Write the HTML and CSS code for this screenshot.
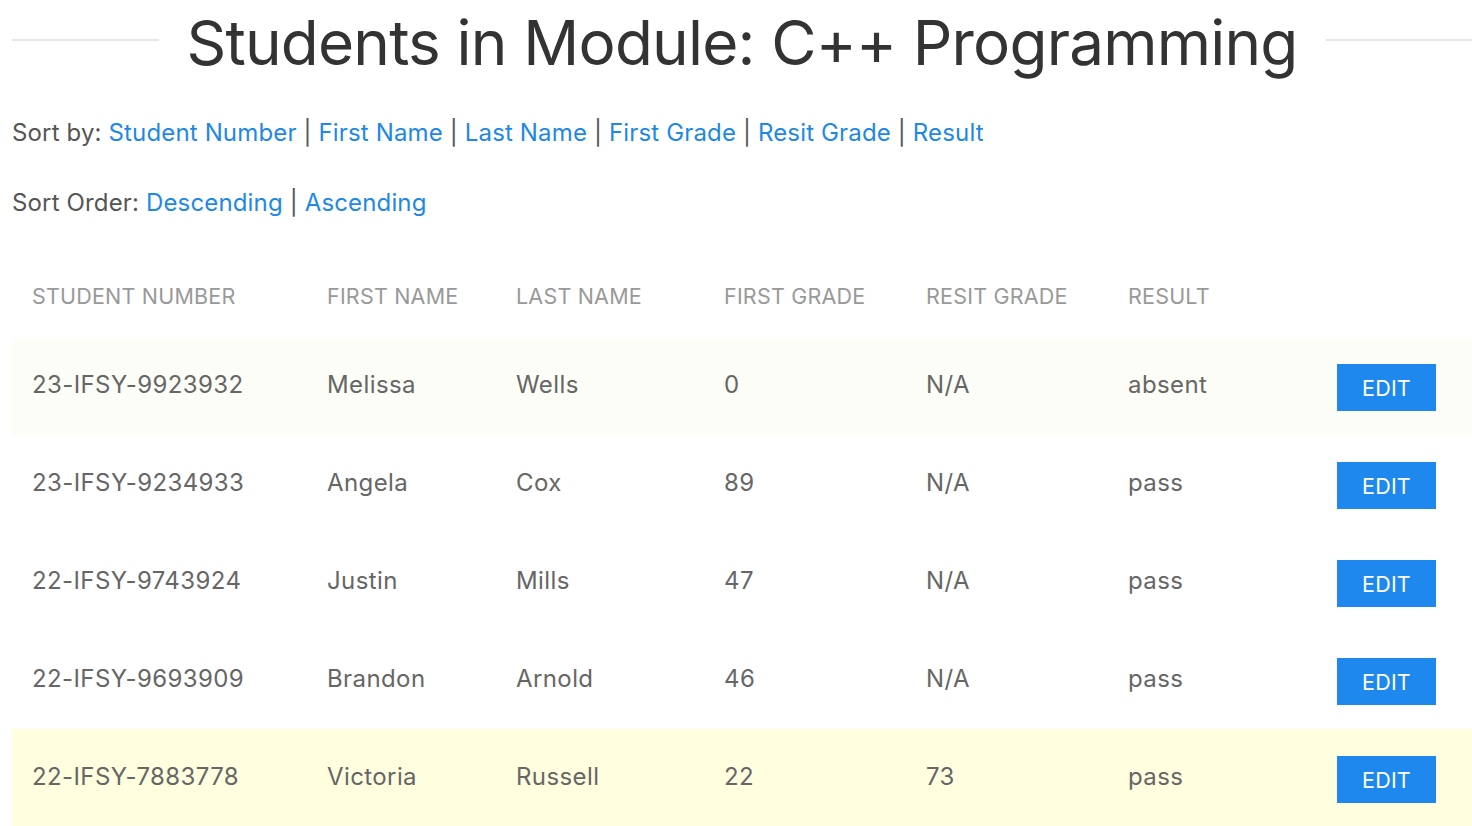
FILE: index.html
```html
<!DOCTYPE html>
<html lang="en">
<head>
<meta charset="utf-8">
<title>Students in Module: C++ Programming</title>
<link rel="stylesheet" href="styles.css">
</head>
<body>
<main class="page">
  <h1 class="title"><span>Students in Module: C++ Programming</span></h1>
  <p class="sort">Sort by: <a href="#">Student Number</a> | <a href="#">First Name</a> | <a href="#">Last Name</a> | <a href="#">First Grade</a> | <a href="#">Resit Grade</a> | <a href="#">Result</a></p>
  <p class="sort">Sort Order: <a href="#">Descending</a> | <a href="#">Ascending</a></p>
  <table class="students">
    <colgroup>
      <col class="c-num"><col class="c-first"><col class="c-last"><col class="c-grade"><col class="c-resit"><col class="c-result"><col class="c-action">
    </colgroup>
    <thead>
      <tr><th>Student Number</th><th>First Name</th><th>Last Name</th><th>First Grade</th><th>Resit Grade</th><th>Result</th><th></th></tr>
    </thead>
    <tbody>
      <tr class="row-faint"><td>23-IFSY-9923932</td><td>Melissa</td><td>Wells</td><td>0</td><td>N/A</td><td>absent</td><td><button class="edit">EDIT</button></td></tr>
      <tr><td>23-IFSY-9234933</td><td>Angela</td><td>Cox</td><td>89</td><td>N/A</td><td>pass</td><td><button class="edit">EDIT</button></td></tr>
      <tr><td>22-IFSY-9743924</td><td>Justin</td><td>Mills</td><td>47</td><td>N/A</td><td>pass</td><td><button class="edit">EDIT</button></td></tr>
      <tr><td>22-IFSY-9693909</td><td>Brandon</td><td>Arnold</td><td>46</td><td>N/A</td><td>pass</td><td><button class="edit">EDIT</button></td></tr>
      <tr class="row-resit"><td>22-IFSY-7883778</td><td>Victoria</td><td>Russell</td><td>22</td><td>73</td><td>pass</td><td><button class="edit">EDIT</button></td></tr>
    </tbody>
  </table>
</main>
</body>
</html>
```

FILE: styles.css
```css
html, body {
  margin: 0;
  padding: 0;
  background: #ffffff;
}
body {
  font-family: Inter, "Noto Sans", "Liberation Sans", sans-serif;
  color: #555;
  overflow: hidden;
}
.page {
  padding-left: 12px;
  width: 1460px;
}
.title {
  display: flex;
  align-items: center;
  gap: 28px;
  margin: 0 0 31px;
  height: 84px;
  font-size: 62px;
  font-weight: 400;
  color: #333;
  letter-spacing: -0.8px;
}
.title::before,
.title::after {
  content: "";
  flex: 1;
  height: 2px;
  background: #e6e6e6;
  margin-top: -5px;
}
.sort {
  margin: 0 0 34px;
  font-size: 24px;
  line-height: 36px;
  letter-spacing: 0.15px;
  color: #555;
}
.sort a {
  color: #1e88e5;
  text-decoration: none;
}
.students {
  width: 1460px;
  border-collapse: collapse;
  table-layout: fixed;
}
.c-num { width: 295px; }
.c-first { width: 189px; }
.c-last { width: 208px; }
.c-grade { width: 202px; }
.c-resit { width: 202px; }
.c-result { width: 209px; }
.c-action { width: 155px; }
.students th {
  height: 82px;
  padding: 0 20px;
  text-align: left;
  font-size: 21.5px;
  letter-spacing: 0.2px;
  font-weight: 400;
  text-transform: uppercase;
  color: #999;
}
.students td {
  height: 94px;
  padding: 0 20px 4px;
  font-size: 24px;
  letter-spacing: 0.4px;
  color: #666;
  vertical-align: middle;
}
.row-faint { background: #fdfdf7; }
.row-resit { background: #ffffe0; }
.edit {
  width: 99px;
  height: 47px;
  margin-top: 7px;
  border: 0;
  border-radius: 0;
  background: #1e88ee;
  color: #fff;
  font-family: inherit;
  font-size: 21.5px;
  letter-spacing: 0.2px;
  cursor: pointer;
}
```
